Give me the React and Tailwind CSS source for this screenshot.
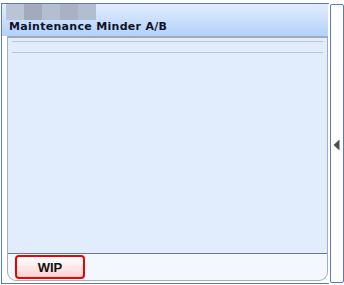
const tabShades = ['bg-[#b9c5d6]', 'bg-[#a3aabb]', 'bg-[#b3bfcf]', 'bg-[#aab1c2]', 'bg-[#b1bdd0]'];

export default function App() {
  return (
    <div className="w-[344px] h-[285px] bg-white flex pt-[3px] font-['DejaVu_Sans',sans-serif]">
      {/* main frame */}
      <div className="w-[329px] h-[281px] ml-[1px] border-l border-t border-b border-[#5a7bb3] flex flex-col">
        {/* header */}
        <div className="h-[32px] w-[326px] bg-gradient-to-b from-[#e2edfd] to-[#b2d1fc] flex flex-col">
          <div className="flex ml-[4px] h-[16px]">
            {tabShades.map((c, i) => (
              <div key={i} className={`${c} w-[18px] h-full`} />
            ))}
          </div>
          <div className="pl-[7px] text-[11px] font-bold leading-[14px] text-[#0e1428] tracking-[0.3px]">
            Maintenance Minder A/B
          </div>
        </div>
        {/* body panel */}
        <div className="ml-[5px] w-[321px] flex-1 flex flex-col border-l border-r border-b border-[#a5adbb] rounded-b-[9px] bg-[#f3f7fe] mb-[2px]">
          <div className="flex-1 bg-[#e1edfd] border-t-2 border-b border-[#a3aab6] border-b-[#6e7684] flex flex-col pt-[3px] px-[4px] gap-[10px]">
            <div className="h-px bg-[#c3c5c9]" />
            <div className="h-px bg-[#c3c5c9]" />
          </div>
          <div className="h-[26px] flex items-center pl-[7px]">
            <button className="w-[70px] h-[24px] rounded-[4px] border-2 border-[#f00000] bg-gradient-to-b from-white to-[#fcd2d2] text-[13px] font-bold font-['Liberation_Sans',sans-serif] text-[#111] leading-none">
              WIP
            </button>
          </div>
        </div>
      </div>
      {/* side rail */}
      <div className="ml-[1px] mt-[1px] w-[14px] h-[279px] border border-[#5a7bb3] rounded-[2px] bg-white flex items-center justify-center">
        <svg width="7" height="12" viewBox="0 0 7 12" className="mt-[3px] mr-[2px]">
          <path d="M6.5 0.5 L0.5 6 L6.5 11.5 Z" fill="#4e4e4e" />
        </svg>
      </div>
    </div>
  );
}
